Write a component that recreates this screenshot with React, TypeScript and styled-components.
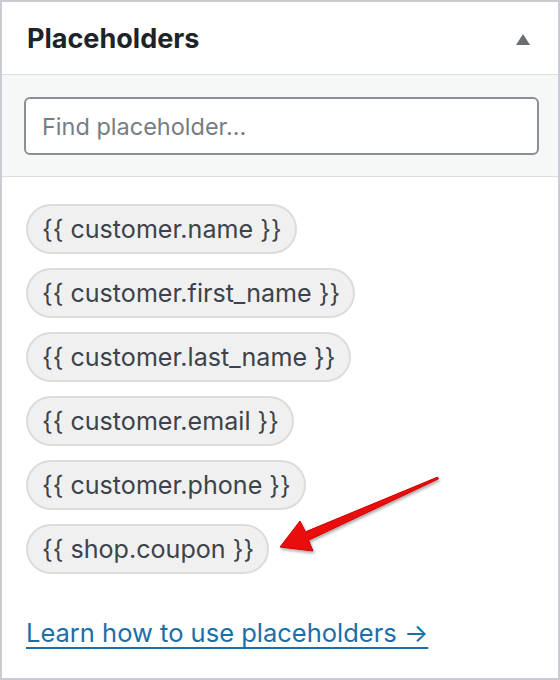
import React from "react";
import styled, { createGlobalStyle } from "styled-components";

const Global = createGlobalStyle`
  html, body { margin: 0; padding: 0; background: #ffffff; }
  * { box-sizing: border-box; }
`;

const Panel = styled.div`
  position: relative;
  width: 560px;
  height: 680px;
  border: 2px solid #c9ccd0;
  background: #ffffff;
  font-family: Inter, "Noto Sans", sans-serif;
  display: flex;
  flex-direction: column;
  overflow: hidden;
`;

const Header = styled.div`
  height: 73px;
  flex: none;
  display: flex;
  align-items: center;
  justify-content: space-between;
  padding: 0 28px 0 25px;
  border-bottom: 1px solid #dcdcde;
`;

const Title = styled.h2`
  margin: 0;
  font-size: 27px;
  font-weight: 700;
  color: #1d2327;
`;

const Toggle = styled.span`
  width: 0;
  height: 0;
  border-left: 7px solid transparent;
  border-right: 7px solid transparent;
  border-bottom: 11px solid #6b6e73;
  margin-top: 2px;
`;

const SearchBar = styled.div`
  flex: none;
  background: #f6f7f7;
  padding: 22px 19px 21px 22px;
  border-bottom: 1px solid #dcdcde;
`;

const SearchInput = styled.input`
  display: block;
  width: 100%;
  height: 58px;
  border: 2px solid #8c8f94;
  border-radius: 6px;
  background: #ffffff;
  padding: 0 16px;
  font-family: Inter, "Noto Sans", sans-serif;
  font-size: 23.5px;
  color: #2c3338;
  outline: none;
  &::placeholder { color: #787c82; }
`;

const Body = styled.div`
  padding: 27px 24px 0 24px;
  display: flex;
  flex-direction: column;
  align-items: flex-start;
`;

const ChipList = styled.div`
  display: flex;
  flex-direction: column;
  align-items: flex-start;
  gap: 14px;
`;

const Chip = styled.span`
  display: inline-flex;
  align-items: center;
  height: 50px;
  padding: 0 13px 0 14px;
  border: 2px solid #dcdcde;
  border-radius: 25px;
  background: #f0f0f1;
  color: #3c434a;
  font-size: 25.1px;
  white-space: nowrap;
`;

const HelpLink = styled.a`
  margin-top: 43px;
  color: #1a6fa8;
  font-size: 25.5px;
  text-decoration: underline;
  text-decoration-thickness: 2px;
  text-underline-offset: 5px;
  cursor: pointer;
`;

const Overlay = styled.svg`
  position: absolute;
  left: -2px;
  top: -2px;
  width: 560px;
  height: 680px;
  pointer-events: none;
`;

const placeholders = [
  "customer.name",
  "customer.first_name",
  "customer.last_name",
  "customer.email",
  "customer.phone",
  "shop.coupon",
];

export default function App() {
  return (
    <>
      <Global />
      <Panel>
        <Header>
          <Title>Placeholders</Title>
          <Toggle />
        </Header>
        <SearchBar>
          <SearchInput placeholder="Find placeholder..." />
        </SearchBar>
        <Body>
          <ChipList>
            {placeholders.map((p) => (
              <Chip key={p}>{`{{ ${p} }}`}</Chip>
            ))}
          </ChipList>
          <HelpLink>Learn how to use placeholders →</HelpLink>
        </Body>
        <Overlay viewBox="0 0 560 680">
          <defs>
            <linearGradient id="arrowFill" x1="0" y1="0" x2="1" y2="1">
              <stop offset="0" stopColor="#ff1a1a" />
              <stop offset="1" stopColor="#d40000" />
            </linearGradient>
            <filter id="arrowShadow" x="-20%" y="-20%" width="140%" height="140%">
              <feDropShadow dx="1" dy="2" stdDeviation="1.5" floodColor="#000" floodOpacity="0.35" />
            </filter>
          </defs>
          <polygon
            points="437.6,477.1 305.5,531.8 300,521 280,547 313,551 308.5,540.2 438.4,478.9"
            fill="url(#arrowFill)"
            stroke="#d00000"
            strokeWidth="1"
            strokeLinejoin="round"
            filter="url(#arrowShadow)"
          />
        </Overlay>
      </Panel>
    </>
  );
}
